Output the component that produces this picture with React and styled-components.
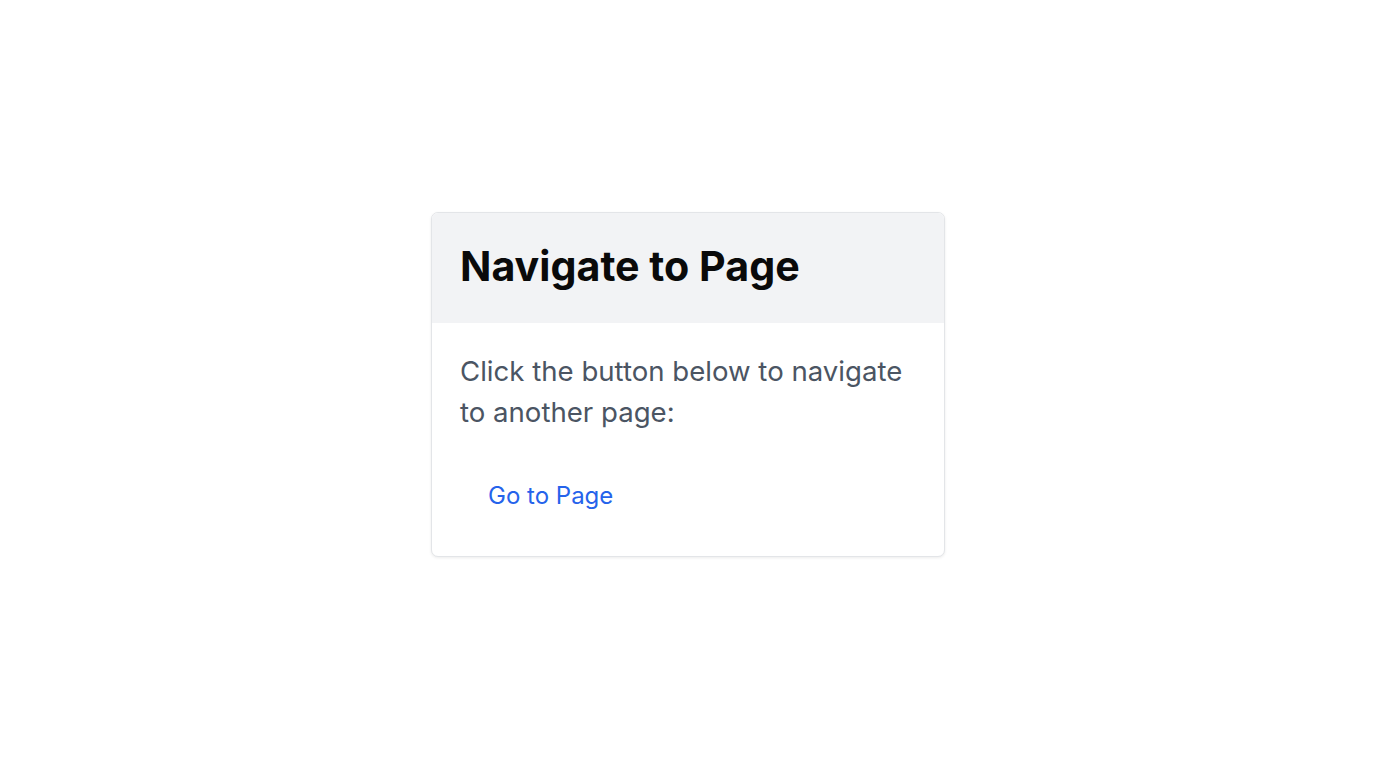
import React from "react";
import styled, { createGlobalStyle } from "styled-components";

const Global = createGlobalStyle`
  * { box-sizing: border-box; }
  html, body { margin: 0; padding: 0; background: #ffffff; }
  body { font-family: Inter, "Noto Sans", sans-serif; }
`;

const Page = styled.div`
  min-height: 100vh;
  display: flex;
  align-items: center;
  justify-content: center;
`;

const Card = styled.div`
  width: 514px;
  background: #ffffff;
  border: 1px solid #e3e5e8;
  border-radius: 7px;
  box-shadow: 0 1px 3px rgba(0, 0, 0, 0.08);
  overflow: hidden;
`;

const Header = styled.div`
  background: #f2f3f5;
  padding: 0 28px 3px;
  height: 110px;
  display: flex;
  align-items: center;
`;

const Title = styled.h1`
  margin: 0;
  font-size: 41.2px;
  line-height: 48px;
  font-weight: 700;
  color: #0a0a0a;
`;

const Body = styled.div`
  padding: 28px 28px 32px;
`;

const Text = styled.p`
  margin: 0;
  font-size: 27.6px;
  line-height: 41px;
  color: #4b5563;
`;

const LinkButton = styled.button`
  display: block;
  margin-top: 35px;
  background: transparent;
  border: none;
  padding: 12px 28px;
  font-family: inherit;
  font-size: 24px;
  line-height: 32px;
  color: #2563eb;
  cursor: pointer;
`;

export default function App() {
  return (
    <>
      <Global />
      <Page>
        <Card>
          <Header>
            <Title>Navigate to Page</Title>
          </Header>
          <Body>
            <Text>Click the button below to navigate to another page:</Text>
            <LinkButton>Go to Page</LinkButton>
          </Body>
        </Card>
      </Page>
    </>
  );
}
